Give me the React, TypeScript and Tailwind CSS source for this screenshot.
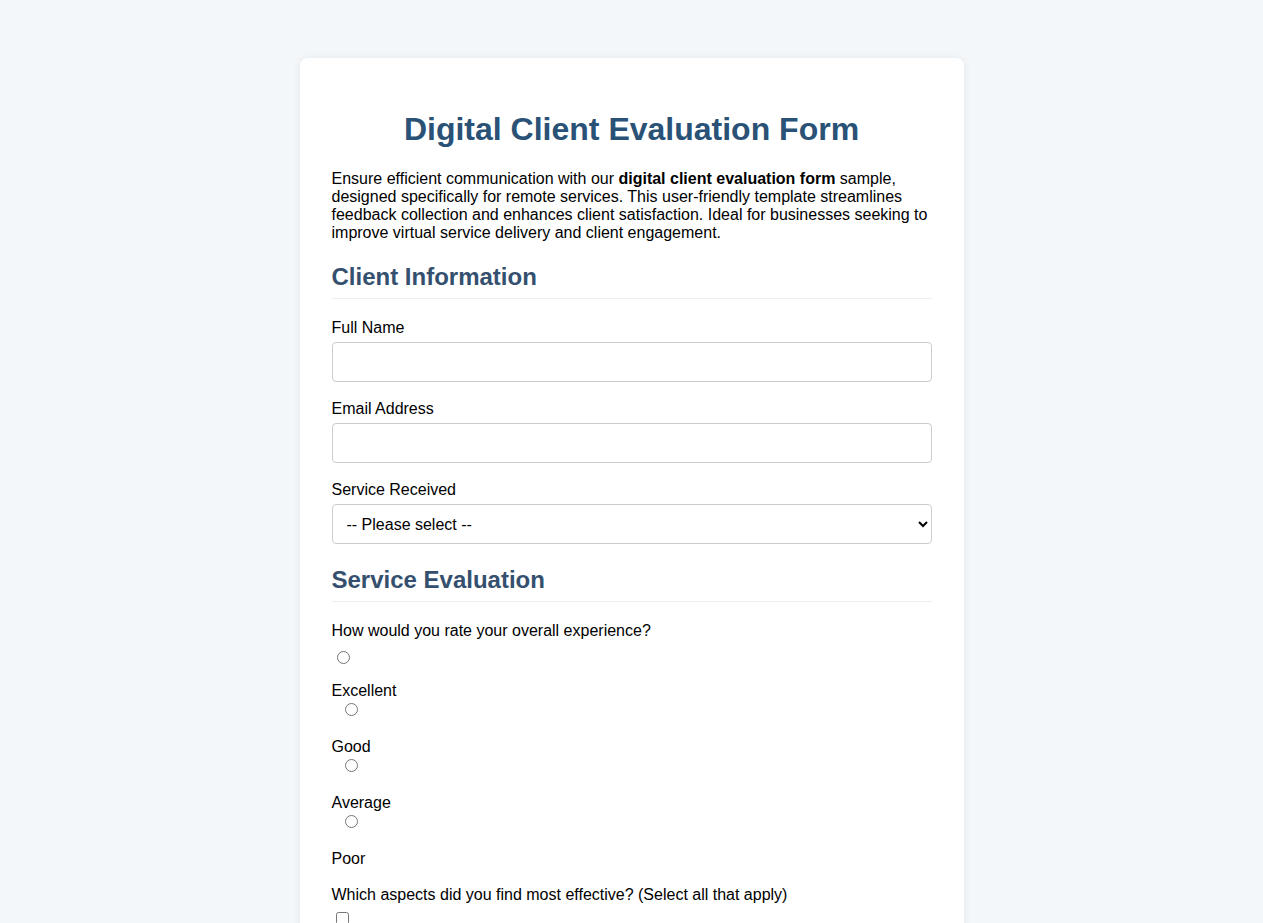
import React from 'react'

const font = { fontFamily: '"Liberation Sans", Arial, sans-serif' }

function Field({ label, children }: { label: string; children: React.ReactNode }) {
  return (
    <div className="mb-[18px]">
      <label className="mb-[5px] block leading-[normal]">{label}</label>
      {children}
    </div>
  )
}

const inputCls =
  'block h-[40px] w-full rounded-[4px] border border-[#cccccc] bg-white px-[10px] py-[10px] text-base leading-[normal] text-black'

const h2Cls =
  'mb-[20px] border-b border-[#eeeeee] pb-[7px] text-2xl font-bold leading-[normal] text-[#34506e]'

export default function App() {
  return (
    <div className="min-h-screen bg-[#f4f7fa] pt-[58px] text-black" style={font}>
      <div className="mx-auto w-[664px] rounded-lg bg-white p-8 shadow-[0_0_10px_rgba(0,0,0,0.06)]">
        <h1 className="mt-[21px] mb-[22px] text-center text-[32px] font-bold leading-[normal] text-[#2a5277]">
          Digital Client Evaluation Form
        </h1>
        <p className="text-base leading-[normal]">
          Ensure efficient communication with our <strong>digital client evaluation form</strong> sample,
          designed specifically for remote services. This user-friendly template streamlines feedback
          collection and enhances client satisfaction. Ideal for businesses seeking to improve virtual
          service delivery and client engagement.
        </p>

        <h2 className={`${h2Cls} mt-[21px]`}>Client Information</h2>
        <Field label="Full Name">
          <input type="text" className={inputCls} />
        </Field>
        <Field label="Email Address">
          <input type="email" className={inputCls} />
        </Field>
        <Field label="Service Received">
          <select className={`${inputCls} py-[9px]`} defaultValue="">
            <option value="">-- Please select --</option>
            <option>Consulting</option>
            <option>Support</option>
            <option>Training</option>
          </select>
        </Field>

        <h2 className={`${h2Cls} mt-[22px]`}>Service Evaluation</h2>
        <label className="mb-[6px] block leading-[normal]">How would you rate your overall experience?</label>
        <div className="mt-[11px] flex h-[13px] items-center">
          <input type="radio" name="rating" className="m-0 ml-[5px] h-[13px] w-[13px]" />
        </div>
        <div className="mt-[18px] leading-[normal]">Excellent</div>
        <div className="mt-[3px] flex h-[13px] items-center">
          <input type="radio" name="rating" className="m-0 ml-[13px] h-[13px] w-[13px]" />
        </div>
        <div className="mt-[22px] leading-[normal]">Good</div>
        <div className="mt-[3px] flex h-[13px] items-center">
          <input type="radio" name="rating" className="m-0 ml-[13px] h-[13px] w-[13px]" />
        </div>
        <div className="mt-[22px] leading-[normal]">Average</div>
        <div className="mt-[3px] flex h-[13px] items-center">
          <input type="radio" name="rating" className="m-0 ml-[13px] h-[13px] w-[13px]" />
        </div>
        <div className="mt-[22px] leading-[normal]">Poor</div>

        <label className="mt-[18px] block leading-[normal]">
          Which aspects did you find most effective? (Select all that apply)
        </label>
        <div className="mt-[8px] flex h-[13px] items-center">
          <input type="checkbox" className="m-0 ml-[4px] h-[13px] w-[13px]" />
        </div>
        <div className="mt-[18px] leading-[normal]">Communication</div>
        <div className="mt-[3px] flex h-[13px] items-center">
          <input type="checkbox" className="m-0 ml-[13px] h-[13px] w-[13px]" />
        </div>
        <div className="mt-[22px] leading-[normal]">Timeliness</div>
      </div>
    </div>
  )
}
